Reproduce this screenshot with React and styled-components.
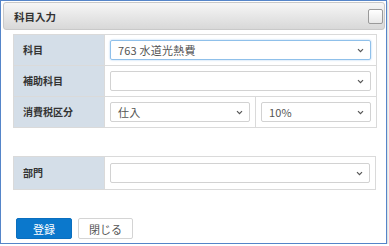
import React from "react";
import styled, { createGlobalStyle } from "styled-components";

const GlobalStyle = createGlobalStyle`
  body {
    margin: 0;
    background: #ffffff;
    font-family: "Noto Sans CJK JP", "Noto Sans", sans-serif;
  }
`;

// outer dialog frame
const Dialog = styled.div`
  width: 387px;
  height: 244px;
  box-sizing: border-box;
  border: 1px solid #5585c9;
  box-shadow: 1px 1px 2px rgba(0, 0, 0, 0.18);
  background: #fff;
`;

const Header = styled.div`
  margin: 1px 1px 0 2px;
  height: 28px;
  box-sizing: border-box;
  border: 1px solid #c9c9c9;
  border-radius: 3px;
  background: linear-gradient(#f6f6f6, #d8d8d8);
  display: flex;
  align-items: center;
  justify-content: space-between;
  padding: 0 1px 0 10px;
`;

const Title = styled.span`
  font-size: 10.5px;
  font-weight: bold;
  color: #333;
`;

const CloseBox = styled.span`
  width: 15px;
  height: 15px;
  box-sizing: border-box;
  border: 1px solid #9a9a9a;
  border-radius: 2px;
  background: linear-gradient(#ffffff, #e8e8e8);
`;

const Body = styled.div`
  padding: 4px 0 0 12px;
`;

const FormTable = styled.table`
  border-collapse: collapse;
  width: 363px;
  table-layout: fixed;
  margin-bottom: ${(p) => p.$gap || 0}px;
`;

const Label = styled.th`
  width: 91px;
  height: ${(p) => p.$h || 30}px;
  box-sizing: border-box;
  background: #d4dee8;
  border: 1px solid #dadada;
  text-align: left;
  padding: 0 0 1px 9px;
  font-size: 10px;
  font-weight: bold;
  color: #333;
`;

const Cell = styled.td`
  border: 1px solid #dadada;
  padding: 0 5px;
  background: #fff;
`;

const Select = styled.div`
  height: 20px;
  box-sizing: border-box;
  border: 1px solid ${(p) => (p.$focus ? "#8fc0ea" : "#d2d2d2")};
  box-shadow: ${(p) => (p.$focus ? "0 0 2px rgba(90, 160, 230, 0.6)" : "none")};
  border-radius: 2px;
  display: flex;
  align-items: center;
  justify-content: space-between;
  padding: 0 6px 0 7px;
  font-size: 11px;
  letter-spacing: 0.2px;
  color: #555;
`;

const Chevron = () => (
  <svg width="7" height="5" viewBox="0 0 7 5">
    <path d="M1 1.2 L3.5 3.7 L6 1.2" fill="none" stroke="#555" strokeWidth="1.2" />
  </svg>
);

const Buttons = styled.div`
  display: flex;
  gap: 6px;
  padding-left: 3px;
`;

const Button = styled.button`
  width: ${(p) => p.$w}px;
  height: 21px;
  box-sizing: border-box;
  border: 1px solid ${(p) => (p.$primary ? "#0a6fbf" : "#d4d4d4")};
  border-radius: 2px;
  background: ${(p) => (p.$primary ? "#0b78cc" : "#fff")};
  color: ${(p) => (p.$primary ? "#fff" : "#555")};
  font-family: inherit;
  font-size: 11px;
  padding: 0;
`;

export default function App() {
  return (
    <>
      <GlobalStyle />
      <Dialog>
        <Header>
          <Title>科目入力</Title>
          <CloseBox />
        </Header>
        <Body>
          <FormTable $gap={28}>
            <colgroup>
              <col style={{ width: 91 }} />
              <col style={{ width: 151 }} />
              <col style={{ width: 121 }} />
            </colgroup>
            <tbody>
              <tr>
                <Label $h={31}>科目</Label>
                <Cell colSpan={2}>
                  <Select $focus>
                    763 水道光熱費
                    <Chevron />
                  </Select>
                </Cell>
              </tr>
              <tr>
                <Label $h={31}>補助科目</Label>
                <Cell colSpan={2}>
                  <Select>
                    <span />
                    <Chevron />
                  </Select>
                </Cell>
              </tr>
              <tr>
                <Label $h={31}>消費税区分</Label>
                <Cell>
                  <Select>
                    仕入
                    <Chevron />
                  </Select>
                </Cell>
                <Cell>
                  <Select>
                    10%
                    <Chevron />
                  </Select>
                </Cell>
              </tr>
            </tbody>
          </FormTable>
          <FormTable $gap={28}>
            <colgroup>
              <col style={{ width: 91 }} />
              <col />
            </colgroup>
            <tbody>
              <tr>
                <Label $h={33}>部門</Label>
                <Cell>
                  <Select>
                    <span />
                    <Chevron />
                  </Select>
                </Cell>
              </tr>
            </tbody>
          </FormTable>
          <Buttons>
            <Button $primary $w={56}>登録</Button>
            <Button $w={55}>閉じる</Button>
          </Buttons>
        </Body>
      </Dialog>
    </>
  );
}
